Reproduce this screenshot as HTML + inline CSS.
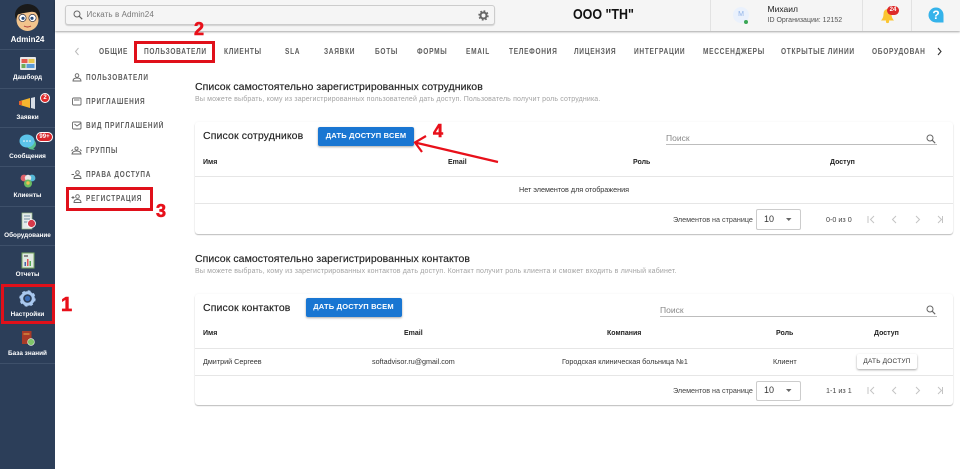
<!DOCTYPE html>
<html lang="ru"><head><meta charset="utf-8"><title>Admin24</title>
<style>
html,body{margin:0;padding:0;width:960px;height:469px;overflow:hidden;background:#fff;font-family:"Liberation Sans",sans-serif}
#r{position:relative;width:960px;height:469px;overflow:hidden}
.a,.t,.s,.m,.h,.c,.l{position:absolute;white-space:nowrap}
svg{position:absolute;overflow:visible}
.s{left:0;width:55px;text-align:center;color:#fff;font-size:6.4px;font-weight:bold;line-height:9px}
.sep{position:absolute;left:0;width:55px;height:1px;background:#3e506a}
.t{top:47px;font-size:8px;line-height:9px;letter-spacing:.85px;color:#5c5c5c;font-weight:bold;transform:scaleX(.82);transform-origin:left center}
.m{left:85.5px;font-size:8px;line-height:9px;letter-spacing:1px;color:#5c5c5c;font-weight:bold;transform:scaleX(.8);transform-origin:left center}
.h{font-size:7px;line-height:9px;color:#222;font-weight:bold}
.c{font-size:7.2px;line-height:9px;color:#333}
.l{height:1px;background:#e6e6e6}
.card{position:absolute;left:195px;width:758px;background:#fff;border-radius:3px;box-shadow:0 1px 1px rgba(0,0,0,.25),0 0 2px rgba(0,0,0,.05)}
.btn{position:absolute;background:#1976d2;color:#fff;font-size:7.5px;font-weight:bold;letter-spacing:.2px;text-align:center;border-radius:2px;box-shadow:0 1px 2px rgba(0,0,0,.35)}
.red{position:absolute;border:3px solid #e0101a;box-sizing:border-box}
.n{position:absolute;color:#e8101a;font-weight:bold;font-size:20px;line-height:20px;-webkit-text-stroke:.6px #e8101a}
.ic{fill:none;stroke:#666;stroke-width:.9}
</style></head><body><div id="r">

<!-- sidebar -->
<div class="a" style="left:0;top:0;width:55px;height:469px;background:#2c3e59"></div>
<div class="sep" style="top:49px"></div><div class="sep" style="top:88px"></div><div class="sep" style="top:127px"></div><div class="sep" style="top:166px"></div><div class="sep" style="top:206px"></div><div class="sep" style="top:245px"></div><div class="sep" style="top:363px"></div>

<svg style="left:13px;top:2px" width="30" height="31" viewBox="0 0 30 31">
<ellipse cx="14.5" cy="13" rx="12.5" ry="11" fill="#1a1a1a"/>
<ellipse cx="14.5" cy="18" rx="11" ry="11" fill="#f2c48d"/>
<path d="M3 13Q6 5 14 7Q22 5 26 13Q22 9 17 10Q9 11 3 13Z" fill="#1a1a1a"/>
<circle cx="9.5" cy="16" r="3.6" fill="#fff" stroke="#334" stroke-width=".7"/><circle cx="19.5" cy="16" r="3.6" fill="#fff" stroke="#334" stroke-width=".7"/>
<circle cx="10" cy="16.3" r="1.6" fill="#2d4f7c"/><circle cx="19" cy="16.3" r="1.6" fill="#2d4f7c"/>
<path d="M11 24Q14.5 26 18 24" stroke="#a33" fill="none"/>
</svg>
<div class="a" style="left:0;width:55px;top:34px;text-align:center;color:#fff;font-size:8px;font-weight:bold;line-height:11px">Admin24</div>

<svg style="left:20px;top:56px" width="16" height="14"><rect width="16" height="13" y="1" rx="1" fill="#e8e8e8"/><rect x="1.5" y="3" width="6" height="4" fill="#e45b4f"/><rect x="8.5" y="3" width="6" height="4" fill="#e9c84c"/><rect x="1.5" y="8" width="4" height="4" fill="#6dab5a"/><rect x="6.5" y="8" width="8" height="4" fill="#5a9bd8"/></svg>
<div class="s" style="top:73px">Дашборд</div>

<svg style="left:19px;top:97px" width="17" height="12"><path d="M1 4L11 1V11L1 8Z" fill="#f5b52e"/><rect x="0" y="4" width="3" height="4" fill="#e5622a"/><path d="M12 1L16 0V12L12 11Z" fill="#d7dde5"/></svg>
<div class="a" style="left:40px;top:93px;width:10px;height:10px;border-radius:50%;background:#df2b2b;border:1px solid #fff;box-sizing:border-box;color:#fff;font-size:6px;line-height:8px;text-align:center;font-weight:bold">2</div>
<div class="s" style="top:113px">Заявки</div>

<svg style="left:19px;top:134px" width="17" height="17"><circle cx="12" cy="10" r="5" fill="#58c18f"/><path d="M13 13L16 16L10 15Z" fill="#58c18f"/><ellipse cx="8" cy="7" rx="7.5" ry="6.5" fill="#5cc4ea"/><circle cx="5" cy="7" r=".8" fill="#fff"/><circle cx="8" cy="7" r=".8" fill="#fff"/><circle cx="11" cy="7" r=".8" fill="#fff"/></svg>
<div class="a" style="left:36px;top:132px;width:17px;height:10px;border-radius:5px;background:#d8262c;border:1px solid #fff;box-sizing:border-box;color:#fff;font-size:6px;line-height:8px;text-align:center;font-weight:bold">99+</div>
<div class="s" style="top:152px">Сообщения</div>

<svg style="left:20px;top:174px" width="16" height="15"><circle cx="4" cy="4" r="3.4" fill="#e0636b"/><circle cx="12" cy="4" r="3.4" fill="#56b9d8"/><circle cx="8" cy="4" r="3.2" fill="#e9e9e9"/><circle cx="8" cy="9.5" r="4" fill="#6bbb62"/><circle cx="8" cy="9" r="1.7" fill="#f0bd52"/></svg>
<div class="s" style="top:191px">Клиенты</div>

<svg style="left:21px;top:212px" width="16" height="18"><rect width="10" height="16" x="1" y="1" fill="#e4eaea" stroke="#9bbb8b" stroke-width=".7"/><path d="M3 4H9M3 7H9M3 10H7" stroke="#6f8ea0"/><circle cx="10.5" cy="11.5" r="4" fill="#d83a4a" stroke="#fff" stroke-width=".8"/></svg>
<div class="s" style="top:231px">Оборудование</div>

<svg style="left:21px;top:252px" width="14" height="17"><rect width="12" height="15" x="1" y="1" fill="#dfe9e2" stroke="#79a860"/><rect x="3" y="3" width="4" height="2" fill="#888"/><rect x="3.5" y="10" width="1.5" height="4" fill="#46a"/><rect x="6" y="7" width="1.5" height="7" fill="#d55"/><rect x="8.5" y="9" width="1.5" height="5" fill="#5a5"/></svg>
<div class="s" style="top:270px">Отчеты</div>

<svg style="left:19px;top:290px" width="17" height="17" viewBox="0 0 17 17"><circle cx="8.5" cy="8.5" r="5.8" fill="none" stroke="#a9c8ef" stroke-width="3"/><circle cx="8.5" cy="8.5" r="7" fill="none" stroke="#a9c8ef" stroke-width="2.4" stroke-dasharray="2.7 2.8"/><circle cx="8.5" cy="8.5" r="2.6" fill="#3a6cb5"/></svg>
<div class="s" style="top:309.5px">Настройки</div>
<div class="red" style="left:1px;top:284px;width:54px;height:40px"></div>

<svg style="left:22px;top:330px" width="13" height="16"><rect x="0" y="1" width="9.5" height="13" fill="#a83a28"/><rect x="1.5" y="3.5" width="6" height="1" fill="#e6b04a"/><circle cx="9" cy="12" r="3.4" fill="#7fc46a" stroke="#eee" stroke-width=".6"/></svg>
<div class="s" style="top:349px">База знаний</div>

<!-- top bar -->
<div class="a" style="left:55px;top:0;width:905px;height:31px;background:#f5f5f5;box-shadow:0 1px 2px rgba(0,0,0,.35)"></div>
<div class="a" style="left:65px;top:5px;width:430px;height:20px;box-sizing:border-box;border:1px solid #ccc;border-radius:3px;background:#f5f5f5;box-shadow:0 1px 1px rgba(0,0,0,.15)"></div>
<svg style="left:73px;top:10px" width="10" height="10"><circle cx="4" cy="4" r="3" fill="none" stroke="#666" stroke-width="1"/><path d="M6.2 6.2L9.2 9.2" stroke="#666" stroke-width="1.2"/></svg>
<div class="a" style="left:86.5px;top:10px;font-size:8px;line-height:10px;color:#777;letter-spacing:.1px">Искать в Admin24</div>
<svg style="left:478px;top:9.5px" width="11" height="11" viewBox="0 0 11 11"><circle cx="5.5" cy="5.5" r="3" fill="none" stroke="#666" stroke-width="2"/><circle cx="5.5" cy="5.5" r="4.4" fill="none" stroke="#666" stroke-width="1.6" stroke-dasharray="1.7 1.75"/></svg>
<div class="a" style="left:573px;top:7px;font-size:15px;line-height:16px;font-weight:bold;color:#111;transform:scaleX(.83);transform-origin:left center">ООО "ТН"</div>
<div class="a" style="left:710px;top:0;width:1px;height:31px;background:#e2e2e2"></div>
<div class="a" style="left:862px;top:0;width:1px;height:31px;background:#e2e2e2"></div>
<div class="a" style="left:911px;top:0;width:1px;height:31px;background:#e2e2e2"></div>
<div class="a" style="left:733px;top:7px;width:16px;height:16px;border-radius:50%;background:#eaf1fc;color:#8fb2e8;font-size:7px;line-height:16px;text-align:center">М</div>
<div class="a" style="left:744px;top:20px;width:4px;height:4px;border-radius:50%;background:#3aa655"></div>
<div class="a" style="left:767.5px;top:4px;font-size:8.5px;line-height:10px;color:#222">Михаил</div>
<div class="a" style="left:767.5px;top:16px;font-size:7px;line-height:10px;color:#555">ID Организации: 12152</div>
<svg style="left:880px;top:7px" width="15" height="16"><path d="M1 13.5Q3.5 11 3.5 7Q3.5 2.5 7.5 2Q11.5 2.5 11.5 7Q11.5 11 14 13.5Z" fill="#fbc531"/><circle cx="7.5" cy="14.5" r="1.6" fill="#fbc531"/></svg>
<div class="a" style="left:887px;top:6px;width:12px;height:9px;border-radius:5px;background:#dd2b2b;color:#fff;font-size:6px;line-height:9px;text-align:center;font-weight:bold">24</div>
<svg style="left:928px;top:7px" width="16" height="16"><circle cx="8" cy="8" r="7.5" fill="#35b3ea"/><path d="M8 8H15.5V15.5H8Z" fill="#35b3ea"/></svg>
<div class="a" style="left:928px;top:7px;width:16px;text-align:center;color:#fff;font-size:12px;line-height:16px;font-weight:bold">?</div>

<!-- tabs -->
<svg style="left:74px;top:47px" width="6" height="9"><path d="M4.5 1L1.5 4.5L4.5 8" fill="none" stroke="#bbb" stroke-width="1"/></svg>
<div class="t" style="left:98.5px">ОБЩИЕ</div>
<div class="t" style="left:143.5px">ПОЛЬЗОВАТЕЛИ</div>
<div class="t" style="left:223.5px">КЛИЕНТЫ</div>
<div class="t" style="left:285px">SLA</div>
<div class="t" style="left:323.5px">ЗАЯВКИ</div>
<div class="t" style="left:375px">БОТЫ</div>
<div class="t" style="left:417px">ФОРМЫ</div>
<div class="t" style="left:466px">EMAIL</div>
<div class="t" style="left:509px">ТЕЛЕФОНИЯ</div>
<div class="t" style="left:574px">ЛИЦЕНЗИЯ</div>
<div class="t" style="left:633.5px">ИНТЕГРАЦИИ</div>
<div class="t" style="left:702.5px">МЕССЕНДЖЕРЫ</div>
<div class="t" style="left:781px">ОТКРЫТЫЕ ЛИНИИ</div>
<div class="t" style="left:872px">ОБОРУДОВАН</div>
<svg style="left:936px;top:47px" width="7" height="9"><path d="M2 1L5 4.5L2 8" fill="none" stroke="#333" stroke-width="1.1"/></svg>
<div class="red" style="left:134px;top:41px;width:81px;height:22px"></div>
<div class="n" style="left:194px;top:20px;font-size:18px;line-height:18px">2</div>

<!-- side menu -->
<svg class="ic" style="left:72px;top:73px" width="10" height="9"><circle cx="5" cy="2.5" r="1.8"/><path d="M1 8Q1 5 5 5Q9 5 9 8Z"/></svg>
<div class="m" style="top:73px">ПОЛЬЗОВАТЕЛИ</div>
<svg class="ic" style="left:72px;top:97px" width="10" height="9"><rect x=".5" y="1" width="8.5" height="7" rx="1"/><path d="M2 3H7.5"/></svg>
<div class="m" style="top:97px">ПРИГЛАШЕНИЯ</div>
<svg class="ic" style="left:72px;top:121px" width="10" height="9"><rect x=".5" y="1" width="8.5" height="7" rx="1"/><path d="M2.5 3L5 5L9 2"/></svg>
<div class="m" style="top:121px">ВИД ПРИГЛАШЕНИЙ</div>
<svg class="ic" style="left:71px;top:146px" width="11" height="9"><circle cx="5.5" cy="2.5" r="1.6"/><path d="M1 8Q1.5 5 5.5 5Q9.5 5 10 8ZM.5 5L2 3.5M10.5 5L9 3.5"/></svg>
<div class="m" style="top:145.5px">ГРУППЫ</div>
<svg class="ic" style="left:71px;top:170px" width="11" height="9"><circle cx="6.5" cy="2.5" r="1.8"/><path d="M3 8.5Q3 5.5 6.5 5.5Q10 5.5 10 8.5ZM.5 4.5H3"/></svg>
<div class="m" style="top:170px">ПРАВА ДОСТУПА</div>
<svg class="ic" style="left:71px;top:194px" width="11" height="9"><circle cx="6.5" cy="2.5" r="1.8"/><path d="M3 8.5Q3 5.5 6.5 5.5Q10 5.5 10 8.5ZM.5 3.5H3.5M2 2V5"/></svg>
<div class="m" style="top:194px">РЕГИСТРАЦИЯ</div>
<div class="red" style="left:66px;top:187px;width:87px;height:24px"></div>
<div class="n" style="left:156px;top:202px;font-size:18px;line-height:18px">3</div>
<div class="n" style="left:61px;top:295px;font-size:20px;line-height:20px">1</div>

<!-- section 1 -->
<div class="a" style="left:195px;top:81px;font-size:10.5px;line-height:12px;color:#222;letter-spacing:.07px;-webkit-text-stroke:.15px #222">Список самостоятельно зарегистрированных сотрудников</div>
<div class="a" style="left:195px;top:95px;font-size:7px;line-height:10px;color:#a3a3a3;letter-spacing:.155px">Вы можете выбрать, кому из зарегистрированных пользователей дать доступ. Пользователь получит роль сотрудника.</div>
<div class="card" style="top:122px;height:112px"></div>
<div class="a" style="left:203px;top:130px;font-size:10.5px;line-height:13px;color:#222;letter-spacing:.12px;-webkit-text-stroke:.15px #222">Список сотрудников</div>
<div class="btn" style="left:318px;top:126.5px;width:96px;height:19px;line-height:18px">ДАТЬ ДОСТУП ВСЕМ</div>
<div class="a" style="left:666px;top:133px;font-size:8.5px;line-height:10px;color:#888">Поиск</div>
<div class="l" style="left:666px;top:144px;width:271px;background:#bdbdbd"></div>
<svg style="left:926px;top:134px" width="10" height="10"><circle cx="4" cy="4" r="3" fill="none" stroke="#666"/><path d="M6.2 6.2L9.2 9.2" stroke="#666" stroke-width="1.1"/></svg>
<div class="h" style="left:203px;top:158px">Имя</div>
<div class="h" style="left:448px;top:158px">Email</div>
<div class="h" style="left:633px;top:158px">Роль</div>
<div class="h" style="left:830px;top:158px">Доступ</div>
<div class="l" style="left:195px;top:176px;width:758px"></div>
<div class="c" style="left:195px;top:185px;width:758px;text-align:center;color:#333">Нет элементов для отображения</div>
<div class="l" style="left:195px;top:203px;width:758px"></div>
<div class="c" style="left:673px;top:215px;color:#444">Элементов на странице</div>
<div class="a" style="left:756px;top:209px;width:45px;height:21px;box-sizing:border-box;border:1px solid #ccc;border-radius:2px"></div>
<div class="a" style="left:764px;top:214px;font-size:9px;line-height:11px;color:#333">10</div>
<svg style="left:786px;top:218px" width="6" height="3"><path d="M0 0H5.5L2.75 3Z" fill="#666"/></svg>
<div class="c" style="left:826px;top:215px;color:#444">0-0 из 0</div>
<svg style="left:867px;top:215px" width="76" height="9" fill="none" stroke="#c4c4c4"><path d="M1 1V8M7 1L3.5 4.5L7 8M29 1L25.5 4.5L29 8M49 1L52.5 4.5L49 8M71 1L74.5 4.5L71 8M75.5 1V8"/></svg>

<!-- arrow + 4 -->
<svg style="left:410px;top:130px" width="95" height="40" viewBox="0 0 95 40"><path d="M88 32L5 12.5M16 6L5 12.5L12 22" fill="none" stroke="#e8101a" stroke-width="2.2"/></svg>
<div class="n" style="left:433px;top:122px;font-size:18px;line-height:18px">4</div>

<!-- section 2 -->
<div class="a" style="left:195px;top:253px;font-size:10.5px;line-height:12px;color:#222;letter-spacing:.07px;-webkit-text-stroke:.15px #222">Список самостоятельно зарегистрированных контактов</div>
<div class="a" style="left:195px;top:267px;font-size:7px;line-height:10px;color:#a3a3a3;letter-spacing:.17px">Вы можете выбрать, кому из зарегистрированных контактов дать доступ. Контакт получит роль клиента и сможет входить в личный кабинет.</div>
<div class="card" style="top:294px;height:111px"></div>
<div class="a" style="left:203px;top:302px;font-size:10.5px;line-height:13px;color:#222;letter-spacing:.12px;-webkit-text-stroke:.15px #222">Список контактов</div>
<div class="btn" style="left:305.5px;top:298px;width:96px;height:19px;line-height:18px">ДАТЬ ДОСТУП ВСЕМ</div>
<div class="a" style="left:660px;top:305px;font-size:8.5px;line-height:10px;color:#888">Поиск</div>
<div class="l" style="left:660px;top:316px;width:277px;background:#bdbdbd"></div>
<svg style="left:926px;top:305px" width="10" height="10"><circle cx="4" cy="4" r="3" fill="none" stroke="#666"/><path d="M6.2 6.2L9.2 9.2" stroke="#666" stroke-width="1.1"/></svg>
<div class="h" style="left:203px;top:329px">Имя</div>
<div class="h" style="left:404px;top:329px">Email</div>
<div class="h" style="left:607px;top:329px">Компания</div>
<div class="h" style="left:776px;top:329px">Роль</div>
<div class="h" style="left:874px;top:329px">Доступ</div>
<div class="l" style="left:195px;top:348px;width:758px"></div>
<div class="c" style="left:203px;top:356.5px">Дмитрий Сергеев</div>
<div class="c" style="left:372px;top:356.5px">softadvisor.ru@gmail.com</div>
<div class="c" style="left:562px;top:356.5px">Городская клиническая больница №1</div>
<div class="c" style="left:773px;top:356.5px">Клиент</div>
<div class="a" style="left:857px;top:354px;width:60px;height:15px;background:#fff;border-radius:2px;box-shadow:0 1px 2px rgba(0,0,0,.35);text-align:center;font-size:6.5px;letter-spacing:.2px;line-height:15px;color:#333">ДАТЬ ДОСТУП</div>
<div class="l" style="left:195px;top:375px;width:758px"></div>
<div class="c" style="left:673px;top:386px;color:#444">Элементов на странице</div>
<div class="a" style="left:756px;top:381px;width:45px;height:20px;box-sizing:border-box;border:1px solid #ccc;border-radius:2px"></div>
<div class="a" style="left:764px;top:385px;font-size:9px;line-height:11px;color:#333">10</div>
<svg style="left:786px;top:389px" width="6" height="3"><path d="M0 0H5.5L2.75 3Z" fill="#666"/></svg>
<div class="c" style="left:826px;top:386px;color:#444">1-1 из 1</div>
<svg style="left:867px;top:386px" width="76" height="9" fill="none" stroke="#c4c4c4"><path d="M1 1V8M7 1L3.5 4.5L7 8M29 1L25.5 4.5L29 8M49 1L52.5 4.5L49 8M71 1L74.5 4.5L71 8M75.5 1V8"/></svg>

</div></body></html>
